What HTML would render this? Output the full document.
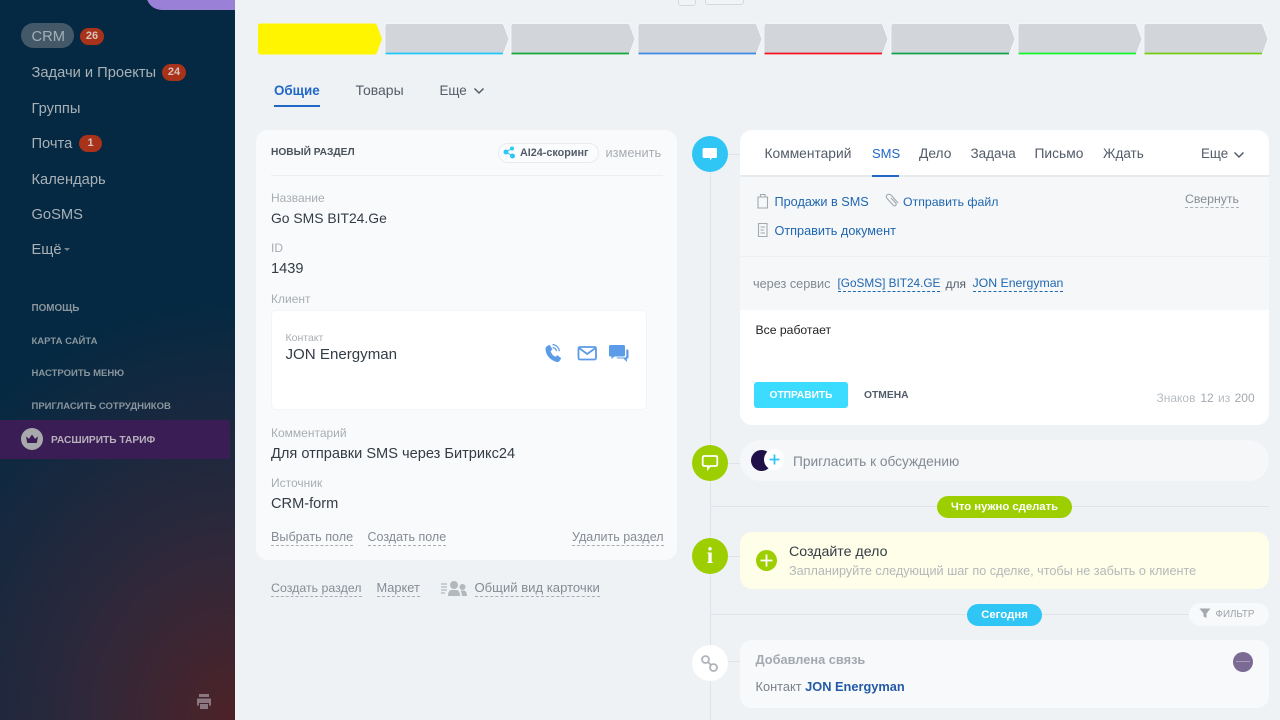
<!DOCTYPE html>
<html lang="ru"><head><meta charset="utf-8"><title>CRM</title>
<style>
html,body{margin:0;padding:0;width:1280px;height:720px;overflow:hidden;background:#eef2f4}
body{position:relative;font-family:"Liberation Sans","Noto Sans CJK SC",sans-serif;color:#333}
.a,.t{position:absolute}
.t{white-space:nowrap;line-height:18px}
.side{left:0;top:0;width:235px;height:720px;background:radial-gradient(ellipse 370px 420px at 100% 100%,#4d2227 0%,#30283a 40%,#052942 100%)}
.m{left:31.5px;font-size:14.7px;color:#a9b1b6}
.b{height:17px;background:#a9321a;border-radius:9px;color:#d7c3bc;font-size:11px;font-weight:bold;line-height:17px;text-align:center}
.s{left:31.5px;font-size:9.5px;font-weight:bold;color:#8a959d}
.lb{font-size:12px;color:#a8adb2}
.v{font-size:14.6px;color:#333c45}
.d{font-size:12.6px;color:#858c94;border-bottom:1px dashed #a8aeb4;line-height:14px;height:15px}
.card{border-radius:12px}
.tab{font-size:13.8px;color:#525c69;top:145px}
.lnk{font-size:12.7px;color:#2067b0}
.dot{width:36px;height:36px;border-radius:50%}
.pill{border-radius:12px;color:#fff;font-size:11.7px;font-weight:bold;text-align:center;line-height:22px;height:22px}
</style></head><body>

<div class="a side"></div>
<div class="a" style="left:146px;top:-20px;width:89px;height:30px;background:#9a80d6;border-radius:0 0 0 16px"></div>
<div class="a" style="left:21px;top:23px;width:53px;height:25px;border-radius:13px;background:#43596a"></div>
<div class="t m" style="top:27.500px;color:#a5afb5">CRM</div>
<div class="a b" style="left:80px;top:28px;width:24px">26</div>
<div class="t m" style="top:63.500px">Задачи и Проекты</div>
<div class="a b" style="left:162px;top:64px;width:24px">24</div>
<div class="t m" style="top:99.500px">Группы</div>
<div class="t m" style="top:134.500px">Почта</div>
<div class="a b" style="left:79px;top:135px;width:23px">1</div>
<div class="t m" style="top:170.500px">Календарь</div>
<div class="t m" style="top:205.500px">GoSMS</div>
<div class="t m" style="top:240.500px">Ещё</div>
<div class="a" style="left:64px;top:248px;border:3px solid transparent;border-top:3px solid #77848c"></div>
<div class="t s" style="top:300px;font-size:9.900px">ПОМОЩЬ</div>
<div class="t s" style="top:333px">КАРТА САЙТА</div>
<div class="t s" style="top:365px">НАСТРОИТЬ МЕНЮ</div>
<div class="t s" style="top:398px">ПРИГЛАСИТЬ СОТРУДНИКОВ</div>
<div class="a" style="left:0;top:420px;width:230px;height:39px;background:#3a1d55"></div>
<div class="a" style="left:21px;top:428px;width:22px;height:22px;border-radius:50%;background:#a9a9ad"></div>
<svg class="a" style="left:21px;top:428px" width="22" height="22" viewBox="0 0 22 22"><path d="M5 8.500l3 2.200L11 6.500l3 4.200 3-2.200-1.200 6.500H6.200z" fill="#3a1d55"/></svg>
<div class="t" style="left:51px;top:431.500px;font-size:10.200px;font-weight:bold;color:#b7b1bc">РАСШИРИТЬ ТАРИФ</div>
<svg class="a" style="left:196px;top:693px" width="16" height="18" viewBox="0 0 16 18"><path d="M3 1h10v3H3zM1 5.500h14v7h-2V10H3v2.500H1zM4 11h8v5H4z" fill="#8a7780"/></svg>

<div class="a" style="left:678px;top:-10px;width:16px;height:14px;border:1px solid #d5d9dd;border-radius:3px;background:#f1f4f6"></div>
<div class="a" style="left:705px;top:-10px;width:37px;height:13px;border:1px solid #d5d9dd;border-radius:3px;background:#f1f4f6"></div>

<svg class="a" style="left:250px;top:15px" width="1030" height="48" viewBox="250 15 1030 48">
<path d="M258 26q0-2.500 3-2.500h113q2.500 0 3 2l5 13.500-5 13.500q-.5 2-3 2H261q-3 0-3-2.500z" fill="#fff500"/>
<g stroke="#f8f9fa" stroke-width=".8" fill="#d2d5da">
<path d="M385 26q0-2.500 3-2.500h113q2.500 0 3 2l5 13.500-5 13.500q-.5 2-3 2H388q-3 0-3-2.500z"/>
<path d="M511 26q0-2.500 3-2.500h113q2.500 0 3 2l5 13.500-5 13.500q-.5 2-3 2H514q-3 0-3-2.500z"/>
<path d="M638 26q0-2.500 3-2.500h113q2.500 0 3 2l5 13.500-5 13.500q-.5 2-3 2H641q-3 0-3-2.500z"/>
<path d="M764 26q0-2.500 3-2.500h113q2.500 0 3 2l5 13.500-5 13.500q-.5 2-3 2H767q-3 0-3-2.500z"/>
<path d="M891 26q0-2.500 3-2.500h113q2.500 0 3 2l5 13.500-5 13.500q-.5 2-3 2H894q-3 0-3-2.500z"/>
<path d="M1018 26q0-2.500 3-2.500h113q2.500 0 3 2l5 13.500-5 13.500q-.5 2-3 2h-113q-3 0-3-2.500z"/>
<path d="M1144 26q0-2.500 3-2.500h113q2.500 0 3 2l5 13.500-5 13.500q-.5 2-3 2h-113q-3 0-3-2.500z"/>
</g>
<g stroke-width="1.800">
<path d="M385.500 53.500H503" stroke="#1ec6fa"/>
<path d="M511.500 53.500H629" stroke="#13a83d"/>
<path d="M638.500 53.500H756" stroke="#3c86e6"/>
<path d="M764.500 53.500H882" stroke="#f4141e"/>
<path d="M891.500 53.500H1009" stroke="#0fa04a"/>
<path d="M1018.500 53.500H1136" stroke="#12f52a"/>
<path d="M1144.500 53.500H1262" stroke="#72cc10"/>
</g>
</svg>

<div class="t" style="left:274px;top:81.500px;font-size:13.400px;font-weight:bold;color:#2067c8">Общие</div>
<div class="a" style="left:274px;top:105px;width:46px;height:1.500px;background:#2067c8"></div>
<div class="t" style="left:355.500px;top:81px;font-size:14px;color:#525c69">Товары</div>
<div class="t" style="left:439.500px;top:81.500px;font-size:13.400px;color:#525c69">Еще</div>
<svg class="a" style="left:473px;top:87px" width="12" height="8"><path d="M1.500 1.500L6 6l4.500-4.500" fill="none" stroke="#525c69" stroke-width="1.500"/></svg>

<div class="a card" style="left:256px;top:130px;width:421px;height:430px;background:#f9fafc"></div>
<div class="t" style="left:271px;top:143.500px;font-size:10.200px;font-weight:bold;color:#4a525c">НОВЫЙ РАЗДЕЛ</div>
<div class="a" style="left:498px;top:143px;width:99px;height:18px;border:1px solid #e8ebee;border-radius:10px;background:#fbfcfd"></div>
<svg class="a" style="left:503px;top:146px" width="13" height="13" viewBox="0 0 13 13"><g fill="#2fc6f6"><circle cx="3" cy="6" r="2.500"/><circle cx="9" cy="2.500" r="2"/><circle cx="9.500" cy="10" r="2.500"/></g><path d="M3 6l6-3.500M3 6l6.500 4" stroke="#2fc6f6"/></svg>
<div class="t" style="left:520px;top:144px;font-size:10.800px;font-weight:bold;color:#535c69">AI24-скоринг</div>
<div class="t" style="left:605.500px;top:144px;font-size:12.800px;color:#a8adb2">изменить</div>
<div class="a" style="left:271px;top:174.500px;width:392px;height:1px;background:#eceef1"></div>

<div class="t lb" style="left:271px;top:189px">Название</div>
<div class="t v" style="left:271px;top:209px;font-size:13.900px">Go SMS BIT24.Ge</div>
<div class="t lb" style="left:271px;top:239px">ID</div>
<div class="t v" style="left:271px;top:259.500px">1439</div>
<div class="t lb" style="left:271px;top:290px">Клиент</div>
<div class="a" style="left:271px;top:310px;width:374px;height:98px;background:#fff;border:1px solid #f3f4f6;border-radius:5px"></div>
<div class="t" style="left:285.500px;top:329px;font-size:10.500px;color:#a8adb2">Контакт</div>
<div class="t" style="left:285.500px;top:346px;font-size:15.100px;color:#333c45">JON Energyman</div>
<svg class="a" style="left:544px;top:343px" width="90" height="22" viewBox="0 0 90 22">
<path d="M2.500 3.500l3-1.800 3 4.500-1.800 1.800c.6 2.700 2.300 4.700 4.800 5.800l1.800-1.600 4 3-1.800 2.800c-.7 1-2 1.300-3.200.9C5.500 16.700 2 12 1.500 6.500c-.1-1.300.2-2.300 1-3z" fill="#5b9be8"/>
<path d="M8.500 1.500c3.700.4 6.300 3 6.900 6.700M8.700 4.500c2.100.3 3.400 1.600 3.800 3.700" fill="none" stroke="#5b9be8" stroke-width="1.200"/>
<rect x="34.500" y="4" width="17.500" height="12.500" rx="1.500" fill="#fff" stroke="#5b9be8" stroke-width="1.800"/><path d="M35 5l8.200 6L51.500 5" fill="none" stroke="#5b9be8" stroke-width="1.800"/>
<path d="M66.500 2h13q1.500 0 1.500 1.500v8.500q0 1.500-1.500 1.500h-9l-3 2.500V13.500h-1Q65 13.500 65 12V3.500Q65 2 66.500 2z" fill="#5b9be8"/>
<path d="M82.300 6.500h1.200q1 0 1 1v7q0 1-1 1h-.6v3.500l-3.400-3.500h-6l-1.500-1h8.500q1.800 0 1.800-1.800z" fill="#5b9be8"/>
</svg>

<div class="t lb" style="left:271px;top:424px">Комментарий</div>
<div class="t v" style="left:271px;top:444.500px">Для отправки SMS через Битрикс24</div>
<div class="t lb" style="left:271px;top:474px">Источник</div>
<div class="t v" style="left:271px;top:495px">CRM-form</div>
<div class="t d" style="left:271px;top:530px">Выбрать поле</div>
<div class="t d" style="left:367.500px;top:530px;font-size:12.500px">Создать поле</div>
<div class="t d" style="left:572px;top:530px;font-size:12.500px">Удалить раздел</div>
<div class="t d" style="left:271px;top:581px;font-size:12.400px">Создать раздел</div>
<div class="t d" style="left:376.500px;top:581px;font-size:12.800px">Маркет</div>
<svg class="a" style="left:441px;top:579px" width="27" height="18" viewBox="0 0 27 18"><path d="M0 5h6M0 8h6M0 11h6M0 14h4" stroke="#b3b8bd" stroke-width="1.200"/><circle cx="13" cy="6" r="4" fill="#b3b8bd"/><path d="M7 17q0-5 3-6h6q3 1 3 6z" fill="#b3b8bd"/><circle cx="21.500" cy="8" r="3" fill="#b3b8bd"/><path d="M21 17q0-3-1.500-5.500h3.500q3 .5 3 5.500z" fill="#b3b8bd"/></svg>
<div class="t d" style="left:474.500px;top:581px;font-size:13.100px">Общий вид карточки</div>

<div class="a" style="left:710px;top:150px;width:1px;height:570px;background:#dfe3e7"></div>
<div class="a" style="left:725px;top:153.500px;width:15px;height:1px;background:#dfe3e7"></div>
<div class="a" style="left:725px;top:463px;width:15px;height:1px;background:#dfe3e7"></div>
<div class="a" style="left:725px;top:556px;width:15px;height:1px;background:#dfe3e7"></div>
<div class="a" style="left:725px;top:661px;width:15px;height:1px;background:#dfe3e7"></div>
<div class="a" style="left:711px;top:505.500px;width:558px;height:1.500px;background:#e0e4e8"></div>
<div class="a" style="left:711px;top:613.500px;width:500px;height:1.500px;background:#e0e4e8"></div>

<div class="a dot" style="left:692px;top:136px;background:#2fc6f6"></div>
<svg class="a" style="left:702px;top:147px" width="16" height="15" viewBox="0 0 16 15"><path d="M2 1h11.500q1.500 0 1.500 1.500v7q0 1.500-1.500 1.500H10l-2 2.500V11H2Q.6 11 .6 9.500v-7Q.6 1 2 1z" fill="#fff"/></svg>

<div class="a card" style="left:740px;top:130px;width:529px;height:295px;background:#fff"></div>
<div class="t tab" style="left:764.500px">Комментарий</div>
<div class="t tab" style="left:872px;color:#2067c8;font-size:13px">SMS</div>
<div class="t tab" style="left:919px">Дело</div>
<div class="t tab" style="left:970.500px;font-size:13.500px">Задача</div>
<div class="t tab" style="left:1034.500px">Письмо</div>
<div class="t tab" style="left:1103px;font-size:13.500px">Ждать</div>
<div class="t tab" style="left:1201px;font-size:13.400px">Еще</div>
<svg class="a" style="left:1233px;top:151px" width="12" height="8"><path d="M1.500 1.500L6 6l4.500-4.500" fill="none" stroke="#525c69" stroke-width="1.500"/></svg>
<div class="a" style="left:740px;top:175px;width:529px;height:81px;background:#f5f7f9;border-top:2px solid #e8ebee;box-sizing:border-box"></div>
<div class="a" style="left:872px;top:175px;width:27px;height:2px;background:#2067c8"></div>
<div class="a" style="left:740px;top:256px;width:529px;height:54px;background:#f5f7f9;border-top:1px solid #eef0f2;box-sizing:border-box"></div>

<svg class="a" style="left:756px;top:192px" width="14" height="18" viewBox="0 0 14 18"><path d="M2 5h9.500v11H2zM4.500 5V2.500h4.500V5" fill="none" stroke="#a3a9af" stroke-width="1.100"/></svg>
<div class="t lnk" style="left:774.500px;top:193px">Продажи в SMS</div>
<svg class="a" style="left:885px;top:192px" width="15" height="16" viewBox="0 0 15 16"><path d="M13 11L6.500 3.500C5 2 3 2 2 3s-1 2.500.5 4l5.500 6c1 1 2 1 2.700.4s.7-1.800-.2-2.800L6 6" fill="none" stroke="#a3a9af" stroke-width="1.100"/></svg>
<div class="t lnk" style="left:903px;top:193px;font-size:12.300px">Отправить файл</div>
<div class="t d" style="left:1185px;top:191.500px;font-size:12.300px">Свернуть</div>
<svg class="a" style="left:756px;top:222px" width="14" height="17" viewBox="0 0 14 17"><path d="M2.500 1.500h8.500v13H2.500zM4.500 5h4.500M4.500 8h3.500M4.500 11h4.500" fill="none" stroke="#a3a9af" stroke-width="1.100"/></svg>
<div class="t lnk" style="left:774.500px;top:222px">Отправить документ</div>

<div class="t" style="left:753px;top:274.500px;font-size:12.700px;color:#828a92">через сервис</div>
<div class="t" style="left:837.500px;top:275.500px;font-size:11.800px;color:#2067b0;border-bottom:1px dashed #2067b0;line-height:14px;height:15px">[GoSMS] BIT24.GE</div>
<div class="t" style="left:945.500px;top:274.500px;font-size:12px;color:#525c69">для</div>
<div class="t" style="left:972.500px;top:275.500px;font-size:12.300px;color:#2067b0;border-bottom:1px dashed #2067b0;line-height:14px;height:15px">JON Energyman</div>
<div class="t" style="left:755.500px;top:321px;font-size:12.200px;color:#222">Все работает</div>
<div class="a" style="left:754px;top:382px;width:94px;height:26px;border-radius:3px;background:#3bdcff;color:#fff;font-size:10.200px;font-weight:bold;line-height:27px;text-align:center">ОТПРАВИТЬ</div>
<div class="t" style="left:864px;top:386.500px;font-size:10.300px;font-weight:bold;color:#535c69">ОТМЕНА</div>
<div class="t" style="left:1156.500px;top:389px;font-size:12px;color:#b7bcc2">Знаков <span style="color:#a3a9af;margin-left:1.500px">12</span> <span style="margin-left:1px">из</span> <span style="color:#a3a9af;margin-left:1px">200</span></div>

<div class="a dot" style="left:692px;top:445px;background:#9dcf00"></div>
<svg class="a" style="left:701px;top:454px" width="18" height="18" viewBox="0 0 18 18"><path d="M3.500 2h11q1.800 0 1.800 1.800v6.400q0 1.800-1.800 1.800H9l-2 2.500V12H3.500Q1.700 12 1.700 10.200V3.800Q1.700 2 3.500 2z" fill="none" stroke="#fff" stroke-width="1.800"/></svg>
<div class="a" style="left:740px;top:440px;width:529px;height:41px;border-radius:21px;background:#f5f7f9"></div>
<div class="a" style="left:751px;top:450px;width:21px;height:21px;border-radius:50%;background:#1f1147"></div>
<div class="a" style="left:764px;top:449px;width:20px;height:21px;border-radius:50%;background:#fff"></div>
<svg class="a" style="left:768px;top:453px" width="13" height="13"><path d="M6.500 1.500v10M1.500 6.500h10" stroke="#2fc6f6" stroke-width="1.800"/></svg>
<div class="t" style="left:793px;top:453px;font-size:13.700px;color:#828a92">Пригласить к обсуждению</div>

<div class="a pill" style="left:937px;top:496px;width:135px;background:#9dcf00;font-size:11.300px">Что нужно сделать</div>

<div class="a dot" style="left:692px;top:538px;background:#9dcf00"></div>
<div class="t" style="left:692px;top:547px;width:36px;text-align:center;color:#fff;font:bold 23px/18px 'Liberation Serif',serif">i</div>
<div class="a card" style="left:740px;top:532px;width:529px;height:57px;background:#fefee9"></div>
<div class="a" style="left:756px;top:550px;width:21px;height:21px;border-radius:50%;background:#9dcf00"></div>
<svg class="a" style="left:756px;top:550px" width="21" height="21"><path d="M10.500 4.500v12M4.500 10.500h12" stroke="#fff" stroke-width="1.800"/></svg>
<div class="t" style="left:789px;top:542.500px;font-size:14.200px;color:#333c45">Создайте дело</div>
<div class="t" style="left:789px;top:562px;font-size:12.650px;color:#b5b8ba">Запланируйте следующий шаг по сделке, чтобы не забыть о клиенте</div>

<div class="a pill" style="left:967px;top:603.500px;width:75px;background:#2fc6f6;font-size:11.400px">Сегодня</div>
<div class="a" style="left:1189px;top:603px;width:80px;height:23px;border-radius:12px;background:#f7f9fa"></div>
<svg class="a" style="left:1199px;top:608px" width="12" height="11" viewBox="0 0 12 11"><path d="M.5.500h11L7.500 5.500V10l-3-1.500V5.500z" fill="#a3a9af"/></svg>
<div class="t" style="left:1215.500px;top:605.500px;font-size:9.800px;color:#9ea4aa">ФИЛЬТР</div>

<div class="a dot" style="left:692px;top:645px;background:#fff"></div>
<svg class="a" style="left:700px;top:654px" width="20" height="20" viewBox="0 0 20 20"><g fill="none" stroke="#b0b4b8" stroke-width="1.800"><ellipse cx="5.500" cy="5.500" rx="3.500" ry="3.500"/><ellipse cx="13.500" cy="13.500" rx="3.500" ry="3.500"/><path d="M8 8l3 3"/></g></svg>
<div class="a card" style="left:740px;top:640px;width:529px;height:68px;background:#f8f9fb"></div>
<div class="t" style="left:755.500px;top:651px;font-size:12.800px;font-weight:bold;color:#a3a9b1">Добавлена связь</div>
<div class="a" style="left:1233px;top:652px;width:20px;height:20px;border-radius:50%;background:#7a6a94"></div>
<div class="a" style="left:1236px;top:661px;width:14px;height:1px;background:#a39cbc"></div>
<div class="t" style="left:755.500px;top:677.500px;font-size:12.800px;color:#7b828a">Контакт <span style="font-weight:bold;color:#235aa5">JON Energyman</span></div>

</body></html>
